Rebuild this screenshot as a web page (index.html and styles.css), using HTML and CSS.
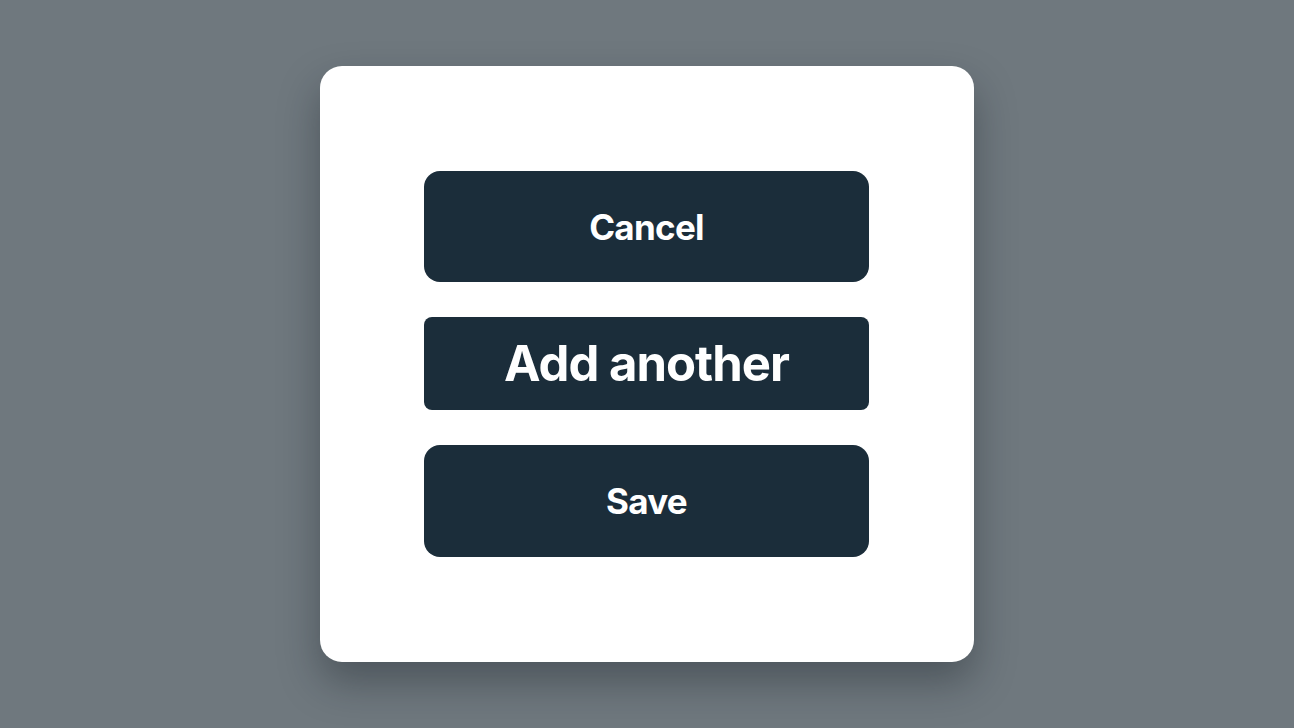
FILE: index.html
```html
<!DOCTYPE html>
<html>
<head>
<meta charset="utf-8">
<link rel="stylesheet" href="styles.css">
</head>
<body>
<div class="stage">
  <div class="card">
    <button class="btn btn-lg">Cancel</button>
    <button class="btn btn-tight">Add another</button>
    <button class="btn btn-lg btn-save">Save</button>
  </div>
</div>
</body>
</html>
```
FILE: styles.css
```css
html, body {
  margin: 0;
  padding: 0;
  height: 100%;
}
body {
  background: #6f787e;
  font-family: Inter, "Noto Sans", sans-serif;
}
.stage {
  height: 728px;
  display: flex;
  justify-content: center;
  align-items: flex-start;
  padding-top: 66px;
  box-sizing: border-box;
}
.card {
  width: 654px;
  height: 596px;
  box-sizing: border-box;
  background: #ffffff;
  border-radius: 22px;
  padding: 105px 105px 105px 104px;
  display: flex;
  flex-direction: column;
  gap: 35px;
  box-shadow: 0 20px 40px rgba(20, 28, 36, 0.38);
}
.btn {
  border: none;
  background: #1b2d3a;
  color: #ffffff;
  font-family: Inter, "Noto Sans", sans-serif;
  font-weight: 700;
  letter-spacing: -0.02em;
  width: 445px;
  display: flex;
  align-items: center;
  justify-content: center;
  padding: 0;
  flex-shrink: 0;
}
.btn-lg {
  height: 111px;
  border-radius: 16px;
  font-size: 35px;
}
.btn-save {
  height: 112px;
}
.btn-tight {
  height: 93px;
  border-radius: 8px;
  font-size: 49px;
}
```
